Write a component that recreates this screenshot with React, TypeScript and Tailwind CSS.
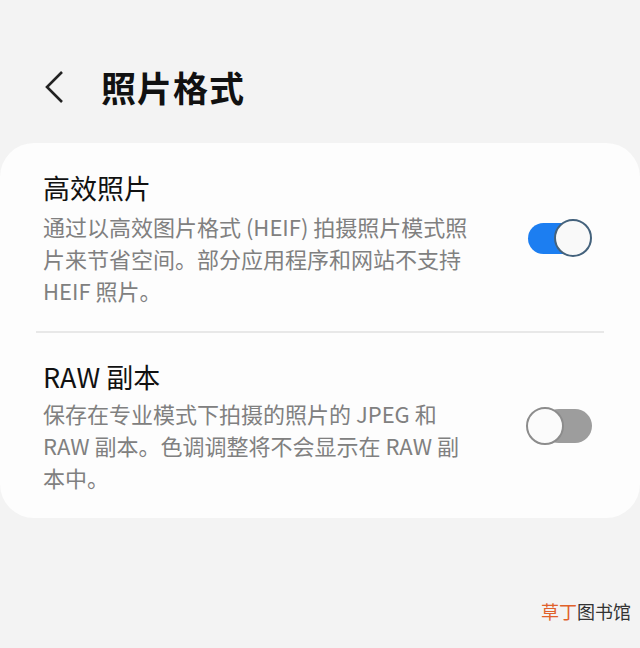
import React from "react";

const font = { fontFamily: '"Noto Sans CJK SC", "Noto Sans", sans-serif' };

function Toggle({ on }: { on: boolean }) {
  if (on) {
    return (
      <div className="relative w-[64px] h-[38px] shrink-0">
        <div className="absolute left-0 top-[4px] w-[50px] h-[31px] rounded-full bg-[#1c7ef1]" />
        <div className="absolute right-0 top-0 w-[38px] h-[38px] rounded-full bg-[#f9f9f9] border-[2px] border-[#44627c]" />
      </div>
    );
  }
  return (
    <div className="relative w-[66px] h-[38px] shrink-0">
      <div className="absolute right-0 top-[2px] w-[50px] h-[34px] rounded-full bg-[#9d9d9d]" />
      <div className="absolute left-0 top-0 w-[38px] h-[38px] rounded-full bg-[#fbfbfb] border-[2px] border-[#8c8c8c]" />
    </div>
  );
}

export default function App() {
  return (
    <div className="relative w-[640px] h-[648px] bg-[#f3f3f3] overflow-hidden" style={font}>
      <div className="flex items-center h-[143px] pt-[30px]">
        <svg width="20" height="34" viewBox="0 0 20 34" className="ml-[45px]">
          <polyline points="17,2 2,17 17,32" fill="none" stroke="#222" strokeWidth="2.6" strokeLinejoin="miter" />
        </svg>
        <div className="ml-[36px] text-[35px] font-bold text-[#111] leading-[44px] tracking-[1px]">照片格式</div>
      </div>

      <div className="bg-[#fdfdfd] rounded-[34px]">
        <div className="flex items-center pl-[43px] pr-[48px] pt-[27px] pb-[25px]">
          <div className="flex-1">
            <div className="text-[27px] leading-[36px] text-[#111]">高效照片</div>
            <div className="mt-[4px] text-[22px] leading-[32px] text-[#808080]">
              通过以高效图片格式 (HEIF) 拍摄照片模式照
              <br />
              片来节省空间。部分应用程序和网站不支持
              <br />
              HEIF 照片。
            </div>
          </div>
          <Toggle on={true} />
        </div>
        <div className="mx-[36px] h-[2px] bg-[#e8e8e8]" />
        <div className="flex items-center pl-[43px] pr-[48px] pt-[26px] pb-[25px]">
          <div className="flex-1">
            <div className="text-[27px] leading-[36px] text-[#111]">RAW 副本</div>
            <div className="mt-[2px] text-[22px] leading-[32px] text-[#808080]">
              保存在专业模式下拍摄的照片的 JPEG 和
              <br />
              RAW 副本。色调调整将不会显示在 RAW 副
              <br />
              本中。
            </div>
          </div>
          <Toggle on={false} />
        </div>
      </div>

      <div className="absolute left-[541px] top-[599px] text-[18px] leading-[24px]">
        <span className="text-[#e0612b]">草丁</span>
        <span className="text-[#333]">图书馆</span>
      </div>
    </div>
  );
}
